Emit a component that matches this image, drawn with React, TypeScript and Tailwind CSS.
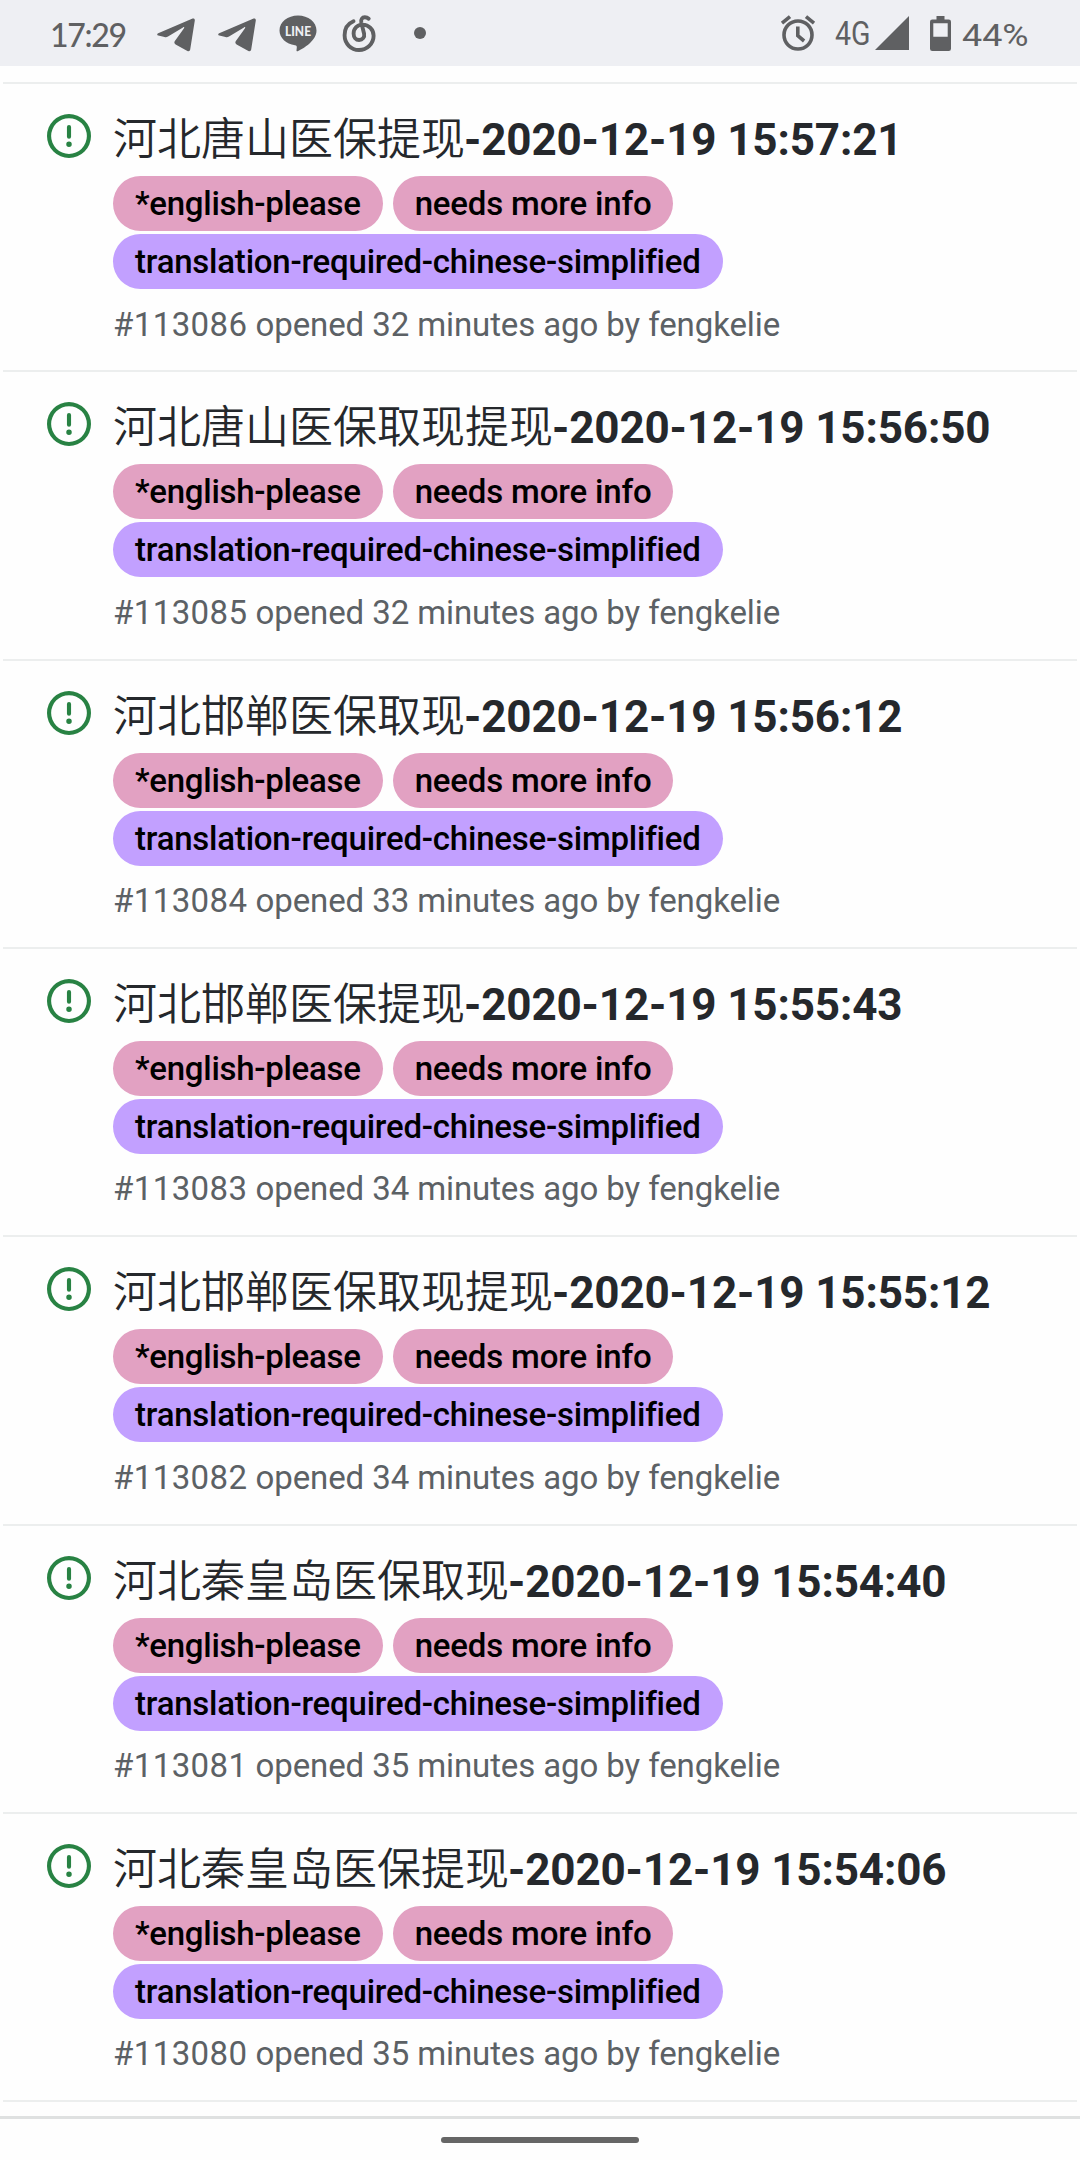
import React from "react";

type Issue = { id: number; place: string; stamp: string; minutes: number };

const issues: Issue[] = [
  { id: 113086, place: "河北唐山医保提现", stamp: "-2020-12-19 15:57:21", minutes: 32 },
  { id: 113085, place: "河北唐山医保取现提现", stamp: "-2020-12-19 15:56:50", minutes: 32 },
  { id: 113084, place: "河北邯郸医保取现", stamp: "-2020-12-19 15:56:12", minutes: 33 },
  { id: 113083, place: "河北邯郸医保提现", stamp: "-2020-12-19 15:55:43", minutes: 34 },
  { id: 113082, place: "河北邯郸医保取现提现", stamp: "-2020-12-19 15:55:12", minutes: 34 },
  { id: 113081, place: "河北秦皇岛医保取现", stamp: "-2020-12-19 15:54:40", minutes: 35 },
  { id: 113080, place: "河北秦皇岛医保提现", stamp: "-2020-12-19 15:54:06", minutes: 35 },
];

function PaperPlane({ className }: { className: string }) {
  return (
    <svg viewBox="0 0 38 34" className={`h-[34px] w-[38px] shrink-0 ${className}`} fill="currentColor">
      <path d="M1.200 15.300 35.600.6c1.300-.5 2.400.3 2.200 1.800L33.200 31.600c-.3 1.600-1.500 2.100-2.800 1.400L18.600 26.600c-1.300-.8-1.600-2-.9-3.300L27 10.200c.6-1-.1-1.500-1-.8L11 18.600c-1.200.8-2.200.9-3.500.5L1.300 17.600c-1.400-.4-1.500-1.700-.1-2.300z" />
    </svg>
  );
}

function StatusBar() {
  return (
    <header className="flex h-[66px] items-center bg-[#eeeff3] text-[#5f6062]">
      <span className="mt-1 ml-[50px] w-[78px] whitespace-nowrap font-['Lato',sans-serif] text-[32px] leading-[36px] font-medium tracking-[-1.300px]">17:29</span>
      <PaperPlane className="ml-[29px] mt-[3px]" />
      <PaperPlane className="ml-[23px] mt-[3px]" />
      <svg viewBox="0 0 38 37" className="ml-[23px] h-[37px] w-[38px] shrink-0">
        <path fill="currentColor" d="M19 .5C8.800.5.5 7 .5 15.500c0 7.500 6.600 13.400 15.500 14.800 1.600.3 1.900 1 1.800 2.200l-.3 2.700c-.1 1 .7 1.400 1.600.900C24.500 33.200 37.500 26 37.500 15.500 37.500 7 29.200.5 19 .5z" />
        <text x="19" y="20.600" textAnchor="middle" textLength="26" lengthAdjust="spacingAndGlyphs" fill="#eeeff3" className="font-['Lato',sans-serif] text-[13px] font-black">LINE</text>
      </svg>
      <svg viewBox="0 0 34 38" className="ml-[25px] mt-[1px] h-[38px] w-[34px] shrink-0" fill="none" stroke="currentColor" strokeWidth="3.900" strokeLinecap="round" strokeLinejoin="round">
        <path d="M11.500 6.300C6 8.600 2.600 14 2.600 20.300 2.600 28.600 9 35 17 35s14.600-6.300 14.600-14.200c0-6.300-4.800-11.200-11-11.200-5.200 0-9 4-9 8.900 0 3.800 2.300 6.500 5.500 6.500 3.500 0 5.700-2.900 5-6.200L19.300 7.600c-.7-3.200.9-5.300 3.500-5.300 1.500 0 2.700.4 3.900 1.500" />
      </svg>
      <span className="ml-[38px] size-3 rounded-full bg-current" />
      <svg viewBox="0 0 36 36" className="ml-[354px] h-9 w-9 shrink-0" fill="none" stroke="currentColor" strokeWidth="3.600">
        <circle cx="18" cy="20" r="14" />
        <path d="M2 8.200 10 1.700M34 8.200 26 1.700M17.800 11.500v9.200l6.300 5.300" />
      </svg>
      <span className="ml-[19px] w-[36px] whitespace-nowrap font-['Roboto',sans-serif] text-[34px] leading-[40px]">
        <span className="inline-block origin-left scale-x-[0.840]">4G</span>
      </span>
      <svg viewBox="0 0 34 34" className="ml-[4px] h-[34px] w-[34px] shrink-0" fill="currentColor">
        <path d="M34 0v34H0z" />
      </svg>
      <svg viewBox="0 0 21 35" className="ml-[21px] h-[35px] w-[21px] shrink-0">
        <path fill="currentColor" fillRule="evenodd" d="M6.500 0h8v3.500h4.200A2.300 2.300 0 0 1 21 5.800v26.900a2.300 2.300 0 0 1-2.300 2.300H2.300A2.300 2.300 0 0 1 0 32.700V5.800a2.300 2.300 0 0 1 2.300-2.300h4.200zM3.300 7.200v13.600h14.400V7.200z" />
      </svg>
      <span className="mt-1 ml-[11px] origin-left scale-x-[1.120] whitespace-nowrap font-['Roboto',sans-serif] text-[32px] leading-[36px]">44%</span>
    </header>
  );
}

function OpenIcon() {
  return (
    <svg viewBox="0 0 16 16" className="mt-[30px] ml-[44px] size-11 shrink-0 fill-[#288243]">
      <path fillRule="evenodd" d="M8 1.500a6.500 6.500 0 100 13 6.500 6.500 0 000-13zM0 8a8 8 0 1116 0A8 8 0 010 8zm9 3a1 1 0 11-2 0 1 1 0 012 0zm-.25-6.250a.75.75 0 00-1.500 0v3.500a.75.75 0 001.500 0v-3.500z" />
    </svg>
  );
}

function Label({ children, className }: { children: React.ReactNode; className: string }) {
  return (
    <span className={`flex h-[55px] items-center whitespace-nowrap rounded-full px-[22px] text-[33px] font-medium leading-[55px] text-black [font-variant-ligatures:common-ligatures] ${className}`}>
      {children}
    </span>
  );
}

function IssueRow({ issue }: { issue: Issue }) {
  return (
    <li className="flex h-[288.330px] border-t-2 border-[#eceeee]">
      <OpenIcon />
      <div className="ml-[22px]">
        <h3 className="mt-[29px] h-[55px] whitespace-nowrap text-[44px] font-bold leading-[55px] tracking-[-0.140px] text-[#25282c]">
          <span className="mr-[-1px] font-['Noto_Sans_CJK_SC',sans-serif] font-[350] leading-none tracking-normal">{issue.place}</span>
          {issue.stamp}
        </h3>
        <div className="mt-[8px] flex flex-wrap gap-x-[10px] gap-y-[3px]">
          <Label className="bg-[#e2a1c2] tracking-[-0.280px]">*english-please</Label>
          <Label className="bg-[#e2a1c2] tracking-[-0.170px]">needs more info</Label>
        </div>
        <div className="mt-[3px] flex">
          <Label className="bg-[#c2a0ff] tracking-[-0.220px]">translation-required-chinese-simplified</Label>
        </div>
        <p className="mt-[14.500px] whitespace-nowrap text-[33px] leading-[42px] tracking-[-0.100px] text-[#5c6165]">
          <span className="tracking-[0.400px]">#{issue.id}</span> opened {issue.minutes} minutes ago by fengkelie
        </p>
      </div>
    </li>
  );
}

export default function App() {
  return (
    <div className="flex h-[2160px] w-[1080px] flex-col overflow-hidden bg-[#fefefe] font-['Roboto','Noto_Sans_CJK_SC',sans-serif]">
      <StatusBar />
      <ul className="mx-[3px] mt-4 h-[2020px] border-b-2 border-[#eceeee]">
        {issues.map((issue) => (
          <IssueRow key={issue.id} issue={issue} />
        ))}
      </ul>
      <footer className="mt-[14px] flex grow justify-center border-t-[3px] border-[#dfe1e1]">
        <div className="mt-[18px] h-[6px] w-[198px] rounded-full bg-[#666666]" />
      </footer>
    </div>
  );
}
